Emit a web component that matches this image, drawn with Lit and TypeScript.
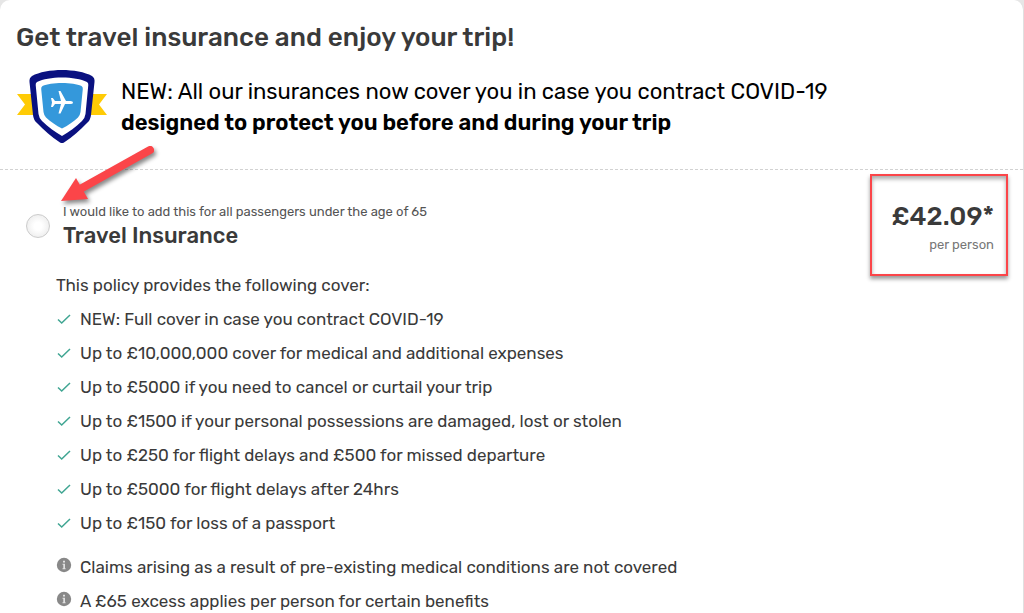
import { LitElement, html, css } from "lit";
import { customElement } from "lit/decorators.js";

const COVER = [
  "NEW: Full cover in case you contract COVID-19",
  "Up to £10,000,000 cover for medical and additional expenses",
  "Up to £5000 if you need to cancel or curtail your trip",
  "Up to £1500 if your personal possessions are damaged, lost or stolen",
  "Up to £250 for flight delays and £500 for missed departure",
  "Up to £5000 for flight delays after 24hrs",
  "Up to £150 for loss of a passport",
];

const NOTES = [
  "Claims arising as a result of pre-existing medical conditions are not covered",
  "A £65 excess applies per person for certain benefits",
];

const shield = html`<svg class="shield" viewBox="0 0 92 74" aria-hidden="true">
  <path fill="#ffcb05" d="M1 24H91L83 34.500L91 45H1L9 34.500Z" />
  <path fill="#0a1180" d="M46 0C57 0 69 2 76 6Q79 8 78.500 12L75 45Q74.500 50 71 53C64 60 57 67 48 72.500Q46 73.500 44 72.500C35 67 28 60 21 53Q17.500 50 17 45L13.500 12Q13 8 16 6C23 2 35 0 46 0Z" />
  <path fill="#fff" d="M46 7.500C56 7.500 65 9 71 12Q72.500 13 72.300 15L69.500 44Q69 48 66 51C60 57 53 62 46 66C39 62 32 57 26 51Q23 48 22.500 44L19.700 15Q19.500 13 21 12C27 9 36 7.500 46 7.500Z" />
  <path fill="#3498db" d="M46 13C54 13 61 14 65.500 16Q67 17 66.800 19L64.500 42Q64 45.500 62 47.500C57 52 52 55.500 46 58.500C40 55.500 35 52 30 47.500Q28 45.500 27.500 42L25.200 19Q25 17 26.500 16C31 14 38 13 46 13Z" />
  <path fill="#fff" d="M57 32.500Q57 34 54.500 34H49L44.500 43.500H42.500L45 34H39L36.800 37H35L36 32.500L35 28H36.800L39 31H45L42.500 21H44.500L50 31H54.500Q57 31 57 32.500Z" />
</svg>`;

const tick = html`<svg class="mark" viewBox="0 0 16 16" aria-hidden="true">
  <path d="M2 8.500L5.700 12L14 4" fill="none" stroke="#3fa592" stroke-width="1.500" />
</svg>`;

const info = html`<svg class="mark info" viewBox="0 0 16 16" aria-hidden="true">
  <circle cx="8" cy="8" r="7.200" fill="#888" />
  <path d="M7 3.800H9V5.500H7ZM6.500 6.800H9V11.200H9.600V12.200H6.500V11.200H7.300V7.800H6.500Z" fill="#e0e0e0" />
</svg>`;

@customElement("app-root")
export class AppRoot extends LitElement {
  static styles = css`
    :host {
      display: block;
      background: #e6e6e6;
      color: #3a3a3a;
      font-family: Rubik, Roboto, sans-serif;
      font-size: 17px;
      line-height: 24px;
    }
    .card {
      background: #fff;
      border-right: 1px solid #e0e0e0;
      border-radius: 10px 10px 0 0;
    }
    h1, h2, p, ul { margin: 0; padding: 0; }
    ul { list-style: none; }
    .intro {
      padding: 22px 16px 25px;
      border-bottom: 1px dashed #d2d2d2;
    }
    h1 { font-size: 26px; line-height: 32px; font-weight: 500; }
    .banner {
      display: flex;
      align-items: center;
      gap: 13px;
      margin-top: 16px;
      color: #000;
      font-size: 22px;
      line-height: 31px;
    }
    .shield { width: 92px; height: 74px; flex: none; }
    .banner strong { display: block; font-weight: 600; }
    .option {
      position: relative;
      display: flex;
      justify-content: space-between;
      align-items: flex-start;
      padding: 4px 15px 0 26px;
    }
    .choice { display: flex; align-items: center; gap: 13px; padding-top: 28px; }
    .radio {
      appearance: none;
      flex: none;
      width: 24px;
      height: 24px;
      margin: 0;
      border: 1px solid #ccc;
      border-radius: 50%;
      background: radial-gradient(circle, #fff 25%, #e6e6e6 100%);
    }
    .choice small { display: block; font-size: 13px; line-height: 20px; color: #555; }
    .name { display: block; font-size: 22px; line-height: 28px; font-weight: 500; }
    .price {
      box-sizing: border-box;
      min-width: 138px;
      padding: 25px 12px 17px;
      border: 2px solid #fb4549;
      box-shadow: 0 3px 4px #0006, inset 0 3px 4px #0005;
      text-align: right;
    }
    .amount { font-size: 26px; line-height: 32px; font-weight: 500; }
    .unit { font-size: 13px; line-height: 24px; color: #777; }
    .arrow {
      position: absolute;
      left: 56px;
      top: -28px;
      width: 104px;
      height: 70px;
      filter: drop-shadow(2px 3px 2px #0007);
      pointer-events: none;
    }
    .details { padding: 0 16px 0 56px; margin-top: -3px; }
    .list { display: grid; gap: 10px; margin-top: 10px; }
    .notes { margin-top: 20px; }
    .list li { display: flex; align-items: center; gap: 8px; }
    .mark { width: 16px; height: 16px; flex: none; }
    .info { margin-bottom: 4px; }
  `;

  render() {
    return html`<main class="card">
      <header class="intro">
        <h1>Get travel insurance and enjoy your trip!</h1>
        <div class="banner">
          ${shield}
          <p>NEW: All our insurances now cover you in case you contract COVID-19
            <strong>designed to protect you before and during your trip</strong></p>
        </div>
      </header>
      <section class="option">
        <div class="choice">
          <input class="radio" type="radio" id="travel" name="insurance" />
          <label for="travel">
            <small>I would like to add this for all passengers under the age of 65</small>
            <span class="name">Travel Insurance</span>
          </label>
        </div>
        <div class="price">
          <p class="amount">£42.09*</p>
          <p class="unit">per person</p>
        </div>
        <svg class="arrow" viewBox="0 0 104 70" aria-hidden="true">
          <path d="M94 8L26 46" stroke="#fb4549" stroke-width="8" stroke-linecap="round" />
          <path d="M5 59L20 36L32 57Z" fill="#fb4549" />
        </svg>
      </section>
      <section class="details">
        <p>This policy provides the following cover:</p>
        <ul class="list">${COVER.map((t) => html`<li>${tick}<span>${t}</span></li>`)}</ul>
        <ul class="list notes">${NOTES.map((t) => html`<li>${info}<span>${t}</span></li>`)}</ul>
      </section>
    </main>`;
  }
}
